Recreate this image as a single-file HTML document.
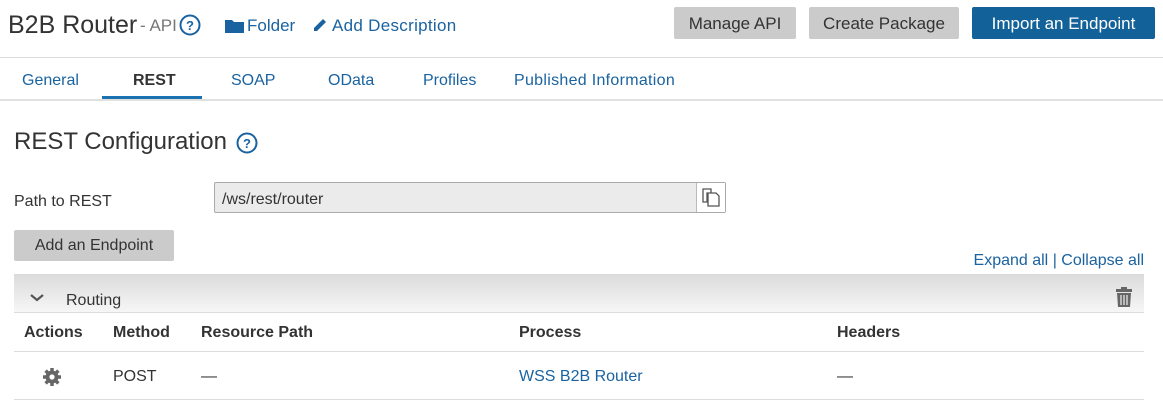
<!DOCTYPE html>
<html><head><style>
*{margin:0;padding:0;box-sizing:border-box}
body{width:1163px;height:419px;background:#fff;font-family:"Liberation Sans","DejaVu Sans",sans-serif;color:#333;position:relative;overflow:hidden}
.a{position:absolute;white-space:nowrap}
.blue{color:#1a63a0}
.btn{position:absolute;background:#cbcbcc;border-radius:2px;font-size:17px;color:#333;text-align:center}
.th{position:absolute;top:324px;font-size:16px;font-weight:bold;color:#333}
</style></head><body>
<div class="a" style="left:8px;top:11px;font-size:25px;color:#333">B2B Router</div>
<div class="a" style="left:140px;top:16px;font-size:17px;color:#777">- API</div>
<svg class="a" style="left:179px;top:14px" width="22" height="22"><circle cx="11" cy="11" r="9.5" fill="none" stroke="#1a63a0" stroke-width="2"/><text x="11" y="16" font-size="13" font-weight="bold" text-anchor="middle" fill="#1a63a0" font-family="Liberation Sans">?</text></svg>
<svg class="a" style="left:225px;top:18px" width="20" height="16"><path d="M0 2h7l2 2h10v11H0z" fill="#1a63a0"/></svg>
<div class="a blue" style="left:247px;top:16px;font-size:17px">Folder</div>
<svg class="a" style="left:312px;top:17px" width="16" height="16"><path d="M2 11L11 2l3 3-9 9H2z" fill="#1a63a0"/></svg>
<div class="a blue" style="left:332px;top:16px;font-size:17px;letter-spacing:0.3px">Add Description</div>
<div class="btn" style="left:674px;top:7px;width:122px;height:32px;line-height:33px">Manage API</div>
<div class="btn" style="left:809px;top:7px;width:150px;height:32px;line-height:33px">Create Package</div>
<div class="btn" style="left:972px;top:7px;width:183px;height:32px;line-height:33px;background:#136199;color:#fff">Import an Endpoint</div>
<div class="a" style="left:0;top:57px;width:1163px;height:1px;background:#ddd"></div>
<div class="a blue" style="left:22px;top:72px;font-size:16px">General</div>
<div class="a" style="left:133px;top:72px;font-size:16px;font-weight:bold;color:#333">REST</div>
<div class="a blue" style="left:231px;top:72px;font-size:16px">SOAP</div>
<div class="a blue" style="left:328px;top:72px;font-size:16px">OData</div>
<div class="a blue" style="left:423px;top:72px;font-size:16px">Profiles</div>
<div class="a blue" style="left:514px;top:72px;font-size:16px;letter-spacing:0.3px">Published Information</div>
<div class="a" style="left:0;top:99px;width:1163px;height:2px;background:#e0e0e0"></div>
<div class="a" style="left:102px;top:96px;width:100px;height:3px;background:#1a73b0"></div>
<div class="a" style="left:14px;top:128px;font-size:24px;color:#333">REST Configuration</div>
<svg class="a" style="left:236px;top:132px" width="22" height="22"><circle cx="11" cy="11" r="9.5" fill="none" stroke="#1a63a0" stroke-width="2"/><text x="11" y="16" font-size="13" font-weight="bold" text-anchor="middle" fill="#1a63a0" font-family="Liberation Sans">?</text></svg>
<div class="a" style="left:14px;top:193px;font-size:16px">Path to REST</div>
<div class="a" style="left:214px;top:182px;width:512px;height:31px;background:#ebebeb;border:1px solid #aaa;border-radius:2px"></div>
<div class="a" style="left:696px;top:183px;width:29px;height:29px;background:#fff;border-left:1px solid #bbb"></div>
<svg class="a" style="left:701px;top:187px" width="20" height="20"><path d="M2 2h8v4h-4v9H2z M7 6h8l3 3v10H7z" fill="none" stroke="#555" stroke-width="1.3"/></svg>
<div class="a" style="left:222px;top:191px;font-size:16px">/ws/rest/router</div>
<div class="btn" style="left:14px;top:230px;width:160px;height:31px;line-height:32px;font-size:16px">Add an Endpoint</div>
<div class="a blue" style="right:19px;top:252px;font-size:16px">Expand all <span style="color:#1a63a0">|</span> Collapse all</div>
<div class="a" style="left:14px;top:274px;width:1130px;height:39px;background:linear-gradient(#dcdbdb,#f6f6f6);border-bottom:1px solid #ddd"></div>
<svg class="a" style="left:30px;top:293px" width="14" height="10"><path d="M1 2l6 5 6-5" fill="none" stroke="#555" stroke-width="2.2"/></svg>
<div class="a" style="left:66px;top:292px;font-size:16px">Routing</div>
<svg class="a" style="left:1115px;top:287px" width="18" height="21"><rect x="1" y="2" width="16" height="3" fill="#666"/><rect x="6" y="0" width="6" height="3" fill="#666"/><path d="M2 6h14l-1 14H3z" fill="#666"/><path d="M6 8v10M9 8v10M12 8v10" stroke="#eee" stroke-width="1.2"/></svg>
<div class="th" style="left:24px">Actions</div>
<div class="th" style="left:113px">Method</div>
<div class="th" style="left:201px">Resource Path</div>
<div class="th" style="left:519px">Process</div>
<div class="th" style="left:837px">Headers</div>
<div class="a" style="left:14px;top:351px;width:1130px;height:1px;background:#ddd"></div>
<svg class="a" style="left:42px;top:367px" width="20" height="20" viewBox="0 0 20 20"><g fill="#666"><circle cx="10" cy="10" r="6.5"/><g stroke="#666" stroke-width="3.5"><path d="M10 1v18M1 10h18M3.6 3.6l12.8 12.8M16.4 3.6L3.6 16.4"/></g></g><circle cx="10" cy="10" r="2.6" fill="#fff"/></svg>
<div class="a" style="left:113px;top:368px;font-size:16px">POST</div>
<div class="a" style="left:201px;top:368px;font-size:16px">—</div>
<div class="a blue" style="left:519px;top:368px;font-size:16px">WSS B2B Router</div>
<div class="a" style="left:837px;top:368px;font-size:16px">—</div>
<div class="a" style="left:14px;top:399px;width:1130px;height:1px;background:#ddd"></div>
</body></html>
